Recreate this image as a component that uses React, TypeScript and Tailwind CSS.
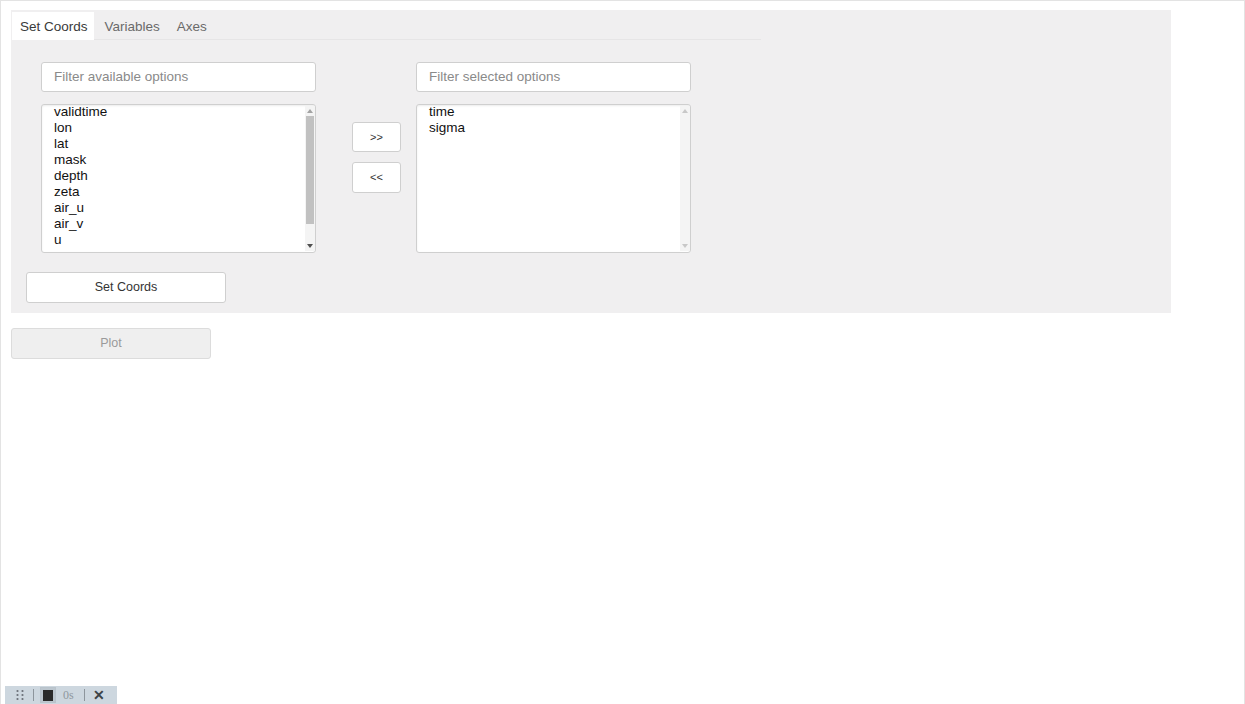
import React from "react";

const available = ["validtime", "lon", "lat", "mask", "depth", "zeta", "air_u", "air_v", "u"];
const selected = ["time", "sigma"];

function ScrollBar({ thumb }: { thumb: boolean }) {
  return (
    <div className="flex h-full w-[10px] flex-col items-center bg-[#f4f4f4]">
      <div className="flex h-[10px] w-full items-center justify-center">
        <svg width="6" height="4" viewBox="0 0 6 4">
          <path d="M0 4 L3 0 L6 4 Z" fill={thumb ? "#a3a3a3" : "#c8c8c8"} />
        </svg>
      </div>
      <div className="w-full flex-1">
        {thumb && <div className="mx-auto h-[108px] w-[8px] bg-[#c1c1c1]" />}
      </div>
      <div className="flex h-[10px] w-full items-center justify-center">
        <svg width="6" height="4" viewBox="0 0 6 4">
          <path d="M0 0 L6 0 L3 4 Z" fill={thumb ? "#505050" : "#c8c8c8"} />
        </svg>
      </div>
    </div>
  );
}

function ListBox({ items, thumb }: { items: string[]; thumb: boolean }) {
  return (
    <div className="flex h-[149px] w-[275px] overflow-hidden rounded-[3px] border border-[#cfcfcf] bg-white shadow-[inset_0_1px_2px_rgba(0,0,0,0.08)]">
      <div className="flex-1 overflow-hidden pl-[12px]">
        <div className="-mt-[1px]">
          {items.map((t) => (
            <div key={t} className="h-[16px] text-[13.5px] leading-[16px] text-[#111]">
              {t}
            </div>
          ))}
        </div>
      </div>
      <div className="py-[1px]">
        <ScrollBar thumb={thumb} />
      </div>
    </div>
  );
}

function FilterInput({ placeholder }: { placeholder: string }) {
  return (
    <div className="flex h-[30px] w-[275px] items-center rounded-[3px] border border-[#cfcfcf] bg-white pl-[12px] text-[13.5px] text-[#8a8a8a]">
      {placeholder}
    </div>
  );
}

export default function App() {
  return (
    <div
      className="relative h-[704px] w-[1245px] overflow-hidden border-l border-r border-t border-[#e3e3e3] bg-white"
      style={{ fontFamily: '"Liberation Sans", Arial, sans-serif' }}
    >
      <div className="ml-[10px] mt-[9px] h-[303px] w-[1160px] bg-[#f0eff0] pl-[1px] pt-[2px]">
        {/* tab strip */}
        <div className="flex h-[28px] w-[749px] border-b border-[#e6e5e6] text-[13.5px]">
          <div className="flex h-[28px] items-center bg-white pl-[8px] pr-[6px] pt-[2px] text-[#3a3a3a]">Set Coords</div>
          <div className="flex h-[28px] items-center pl-[11px] pr-[8px] pt-[2px] text-[#6a6a6a]">Variables</div>
          <div className="flex h-[28px] items-center px-[9px] pt-[2px] text-[#6a6a6a]">Axes</div>
        </div>

        <div className="pl-[14px] pt-[22px]">
          <div className="flex pl-[15px]">
            <div className="flex flex-col gap-[12px]">
              <FilterInput placeholder="Filter available options" />
              <ListBox items={available} thumb />
            </div>
            <div className="ml-[36px] mr-[15px] flex flex-col gap-[10px] pt-[60px]">
              <button className="flex h-[30px] w-[49px] items-center justify-center rounded-[3px] border border-[#cfcfcf] bg-white text-[11px] text-[#333]">
                &gt;&gt;
              </button>
              <button className="flex h-[31px] w-[49px] items-center justify-center rounded-[3px] border border-[#cfcfcf] bg-white text-[11px] text-[#333]">
                &lt;&lt;
              </button>
            </div>
            <div className="flex flex-col gap-[12px]">
              <FilterInput placeholder="Filter selected options" />
              <ListBox items={selected} thumb={false} />
            </div>
          </div>

          <button className="mt-[19px] flex h-[31px] w-[200px] items-center justify-center rounded-[3px] border border-[#cfcfcf] bg-white text-[12.5px] text-[#333]">
            Set Coords
          </button>
        </div>
      </div>

      <button className="ml-[10px] mt-[15px] flex h-[31px] w-[200px] items-center justify-center rounded-[3px] border border-[#dcdcdc] bg-[#efefef] text-[12.5px] text-[#9a9a9a]">
        Plot
      </button>

      {/* floating status toolbar */}
      <div className="absolute bottom-0 left-[4px] flex h-[18px] w-[112px] items-center bg-[#cdd7df] text-[#555]">
        <svg className="ml-[11px]" width="8" height="12" viewBox="0 0 8 12">
          {[1, 5, 9].map((y) =>
            [1.5, 6.5].map((x) => <circle key={`${x}-${y}`} cx={x} cy={y + 1} r="1.1" fill="#6a7078" />)
          )}
        </svg>
        <div className="ml-[9px] h-[12px] w-px bg-[#8d959c]" />
        <div className="ml-[6px] flex h-[16px] w-[16px] items-center justify-center border border-[#b9c3cb] bg-[#bcc6ce]">
          <div className="h-[11px] w-[10px] bg-[#2a2a2a]" />
        </div>
        <span className="ml-[7px] text-[12px] text-[#8f979e]" style={{ fontFamily: '"Liberation Serif", serif' }}>
          0s
        </span>
        <div className="ml-[10px] h-[12px] w-px bg-[#8d959c]" />
        <span className="ml-[8px] text-[14px] font-bold leading-none text-[#3d4348]">✕</span>
      </div>
    </div>
  );
}
